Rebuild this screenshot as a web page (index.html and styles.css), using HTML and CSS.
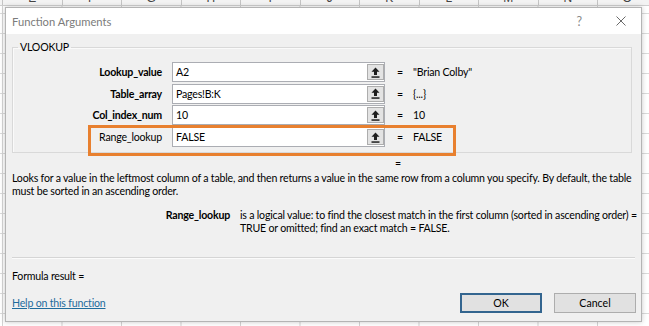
FILE: index.html
```html
<!DOCTYPE html>
<html>
<head>
<meta charset="utf-8">
<link rel="stylesheet" href="styles.css">
</head>
<body>
<div class="sheet">
  <div class="colheads">
    <span>E</span><span>F</span><span>G</span><span>H</span><span>I</span><span>J</span><span>K</span><span>L</span><span>M</span><span>N</span><span>O</span>
  </div>
  <div class="dialog">
    <div class="titlebar">
      <span class="title">Function Arguments</span>
      <span class="help">?</span>
      <svg class="close" width="10" height="10" viewBox="0 0 10 10"><path d="M0.5 0.5 L9.5 9.5 M9.5 0.5 L0.5 9.5" stroke="#6a6a6a" stroke-width="1" fill="none"/></svg>
    </div>
    <div class="content">
      <fieldset class="group">
        <legend>VLOOKUP</legend>
        <div class="args">
          <div class="label req">Lookup_value</div>
          <div class="field"><span class="val">A2</span><span class="refbtn"><svg width="9" height="11" viewBox="0 0 9 11"><path d="M4.5 0.5 L8.5 4.8 H6 V8 H3 V4.8 H0.5 Z" fill="#1e1e1e"/><rect x="0.5" y="9.3" width="8" height="1.5" fill="#1e1e1e"/></svg></span></div>
          <div class="eq">=</div>
          <div class="res">"Brian Colby"</div>

          <div class="label req">Table_array</div>
          <div class="field"><span class="val">Pages!B:K</span><span class="refbtn"><svg width="9" height="11" viewBox="0 0 9 11"><path d="M4.5 0.5 L8.5 4.8 H6 V8 H3 V4.8 H0.5 Z" fill="#1e1e1e"/><rect x="0.5" y="9.3" width="8" height="1.5" fill="#1e1e1e"/></svg></span></div>
          <div class="eq">=</div>
          <div class="res">{...}</div>

          <div class="label req">Col_index_num</div>
          <div class="field"><span class="val">10</span><span class="refbtn"><svg width="9" height="11" viewBox="0 0 9 11"><path d="M4.5 0.5 L8.5 4.8 H6 V8 H3 V4.8 H0.5 Z" fill="#1e1e1e"/><rect x="0.5" y="9.3" width="8" height="1.5" fill="#1e1e1e"/></svg></span></div>
          <div class="eq">=</div>
          <div class="res">10</div>

          <div class="label">Range_lookup</div>
          <div class="field"><span class="val">FALSE</span><span class="refbtn"><svg width="9" height="11" viewBox="0 0 9 11"><path d="M4.5 0.5 L8.5 4.8 H6 V8 H3 V4.8 H0.5 Z" fill="#1e1e1e"/><rect x="0.5" y="9.3" width="8" height="1.5" fill="#1e1e1e"/></svg></span></div>
          <div class="eq">=</div>
          <div class="res">FALSE</div>
        </div>
      </fieldset>
      <div class="eqline">=</div>
      <p class="desc">Looks for a value in the leftmost column of a table, and then returns a value in the same row from a column you specify. By default, the table must be sorted in an ascending order.</p>
      <div class="argdesc">
        <b>Range_lookup</b>
        <span>is a logical value: to find the closest match in the first column (sorted in ascending order) = TRUE or omitted; find an exact match = FALSE.</span>
      </div>
      <div class="sep"></div>
      <div class="result">Formula result =</div>
      <div class="footer">
        <a class="helplink" href="#">Help on this function</a>
        <div class="buttons">
          <button class="btn ok">OK</button>
          <button class="btn">Cancel</button>
        </div>
      </div>
    </div>
    <div class="highlight"></div>
  </div>
</div>
</body>
</html>
```

FILE: styles.css
```css
html, body {
  margin: 0;
  padding: 0;
  background: #fff;
}
body {
  font-family: Lato, "Liberation Sans", sans-serif;
  font-size: 10.6px;
  letter-spacing: -0.2px;
  color: #000;
}
.sheet {
  width: 649px;
  height: 326px;
  overflow: hidden;
  background-color: #fff;
  background-image:
    linear-gradient(to right, #d4d4d4 1px, transparent 1px),
    linear-gradient(to bottom, #dadada 1px, transparent 1px);
  background-size: 59.5px 100%, 100% 20px;
  background-position: 2px 0, 0 13px;
}
.colheads {
  display: flex;
  height: 5px;
  overflow: hidden;
  background: #f3f3f3;
  border-bottom: 1px solid #cfcfcf;
  padding-left: 2px;
}
.colheads span {
  flex: 0 0 59.5px;
  box-sizing: border-box;
  height: 14px;
  margin-top: -9px;
  border-left: 1px solid #c4c4c4;
  text-align: center;
  font: 12px/14px "Liberation Sans", sans-serif;
  letter-spacing: 0;
  color: #444;
}
.dialog {
  position: relative;
  margin: 1px 0 0 5px;
  width: 637px;
  height: 315px;
  box-sizing: border-box;
  border: 1px solid #b4b4b4;
  background: #f0f0f0;
  box-shadow: 0 0 5px rgba(0, 0, 0, 0.22);
  display: flex;
  flex-direction: column;
}
.titlebar {
  height: 26px;
  flex: 0 0 26px;
  background: #fff;
  display: flex;
  align-items: center;
  padding-left: 6px;
}
.title {
  flex: 1;
  font-size: 11.2px;
  letter-spacing: 0;
  color: #7b7b7b;
}
.help {
  font-size: 12.5px;
  color: #8a8a8a;
  margin-right: 34px;
}
.close {
  margin-right: 15px;
}
.content {
  flex: 1;
  padding: 7px 9px 0 6px;
}
.group {
  margin: 0;
  padding: 0 0 5px 0;
  min-width: 0;
  border: 1px solid #d9d9d9;
  box-shadow: inset 1px 1px 0 #fafafa;
}
.group legend {
  margin-left: 5px;
  padding: 0 2px;
  line-height: 13px;
}
.args {
  display: grid;
  grid-template-columns: 149px 223px 28px 1fr;
  grid-auto-rows: 20px;
  row-gap: 1.7px;
  align-items: center;
  padding-top: 8px;
}
.label {
  text-align: right;
}
.label.req {
  font-weight: 700;
}
.field {
  margin-left: 10px;
  height: 20px;
  box-sizing: border-box;
  border: 1px solid #abadb3;
  background: #fff;
  display: flex;
  align-items: center;
  padding-left: 3px;
}
.field .val {
  flex: 1;
}
.refbtn {
  width: 17px;
  height: 16px;
  box-sizing: border-box;
  border: 1px solid #adadad;
  background: #e3e3e3;
  display: flex;
  align-items: center;
  justify-content: center;
}
.eq {
  padding-left: 12px;
}
.eqline {
  margin-top: 4px;
  line-height: 13px;
  padding-left: 383px;
}
.desc {
  margin: 2px 0 0 0;
  line-height: 13px;
}
.argdesc {
  margin-top: 11px;
  display: grid;
  grid-template-columns: 218px 400px;
  column-gap: 10px;
  line-height: 13px;
}
.argdesc b {
  text-align: right;
}
.sep {
  margin: 22px -3px 0 0;
  border-top: 1px solid #d5d5d5;
  border-bottom: 1px solid #fbfbfb;
}
.result {
  margin-top: 11px;
  line-height: 13px;
}
.footer {
  margin-top: 10px;
  margin-right: -4px;
  display: flex;
  align-items: center;
  justify-content: space-between;
}
.helplink {
  color: #1f6c9c;
  text-decoration: underline;
}
.buttons {
  display: flex;
  gap: 12px;
}
.btn {
  width: 82px;
  height: 20px;
  box-sizing: border-box;
  border: 1px solid #adadad;
  background: #e1e1e1;
  font-family: Lato, "Liberation Sans", sans-serif;
  font-size: 10.6px;
  color: #000;
  padding: 0;
}
.btn.ok {
  border: 2px solid #33658f;
}
.highlight {
  position: absolute;
  left: 82px;
  top: 117px;
  width: 368px;
  height: 31px;
  box-sizing: border-box;
  border: 3px solid #e8802f;
}
```
